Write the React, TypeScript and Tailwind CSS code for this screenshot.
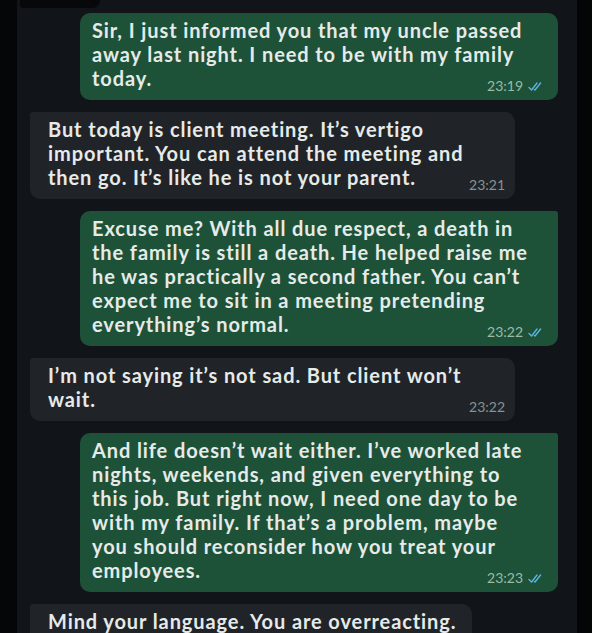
import React from 'react'

type Msg = { out: boolean; lines: string[]; time: string; tail?: boolean }

const messages: Msg[] = [
  {
    out: true,
    lines: ['Sir, I just informed you that my uncle passed', 'away last night. I need to be with my family', 'today.'],
    time: '23:19',
  },
  {
    out: false,
    lines: ['But today is client meeting. It\u2019s vertigo', 'important. You can attend the meeting and', 'then go. It\u2019s like he is not your parent.'],
    time: '23:21',
    tail: true,
  },
  {
    out: true,
    lines: [
      'Excuse me? With all due respect, a death in',
      'the family is still a death. He helped raise me',
      'he was practically a second father. You can\u2019t',
      'expect me to sit in a meeting pretending',
      'everything\u2019s normal.',
    ],
    time: '23:22',
    tail: true,
  },
  {
    out: false,
    lines: ['I\u2019m not saying it\u2019s not sad. But client won\u2019t', 'wait.'],
    time: '23:22',
    tail: true,
  },
  {
    out: true,
    lines: [
      'And life doesn\u2019t wait either. I\u2019ve worked late',
      'nights, weekends, and given everything to',
      'this job. But right now, I need one day to be',
      'with my family. If that\u2019s a problem, maybe',
      'you should reconsider how you treat your',
      'employees.',
    ],
    time: '23:23',
    tail: true,
  },
  {
    out: false,
    lines: ['Mind your language. You are overreacting.'],
    time: '23:24',
    tail: true,
  },
]

const Ticks = () => (
  <svg width="16" height="11" viewBox="0 0 16 11" fill="none" stroke="#5cb3dd" strokeWidth="1.4" strokeLinecap="round" strokeLinejoin="round">
    <path d="M1 6.5 L3.6 9 L9 2" />
    <path d="M6.4 8.6 L7 9 L12.6 2" />
  </svg>
)

const Bubble = ({ msg, w, last }: { msg: Msg; w: string; last?: boolean }) => {
  return (
    <div
      className={`relative ${w} pt-[5px] ${last ? 'pb-[30px]' : 'pb-[10px]'} text-[20px] leading-[24px] font-bold tracking-[0.9px] text-[#e6eae8] ${
        msg.out
          ? `self-start ml-[63px] bg-[#1d5239] pl-[12px] rounded-[10px] ${msg.tail ? 'rounded-tr-[3px]' : ''}`
          : `self-start ml-[13px] bg-[#202428] pl-[18px] rounded-[10px] ${msg.tail ? 'rounded-tl-[3px]' : ''}`
      }`}
    >
      {msg.lines.map((l, i) => (
        <div key={i} className="whitespace-nowrap">{l}</div>
      ))}
      {!last && (
        <div
          className={`absolute bottom-[6px] flex items-center gap-[5px] text-[14px] leading-[16px] font-normal tracking-normal ${
            msg.out ? 'right-[14px] text-[#98bca9]' : 'right-[10px] text-[#8b9094]'
          }`}
        >
          <span>{msg.time}</span>
          {msg.out && <Ticks />}
        </div>
      )}
    </div>
  )
}

export default function App() {
  return (
    <div className="w-[592px] h-[633px] overflow-hidden flex bg-[#050607]" style={{ fontFamily: 'Lato, "Open Sans", sans-serif' }}>
      <div className="w-[17px] shrink-0 bg-[#050607]" />
      <div className="relative flex-1 bg-[#111418] pt-[13px]">
        <div className="absolute top-0 left-[3px] h-[8px] w-[80px] bg-[#07080a] rounded-br-[14px] rounded-bl-[6px]" />
        <div className="flex flex-col gap-3">
          {messages.map((m, i) => (
            <Bubble key={i} msg={m} last={i === 5} w={m.out ? 'w-[478px]' : i === 5 ? 'w-[442px]' : 'w-[485px]'} />
          ))}
        </div>
      </div>
      <div className="w-[15px] shrink-0 bg-[#040505]" />
    </div>
  )
}
